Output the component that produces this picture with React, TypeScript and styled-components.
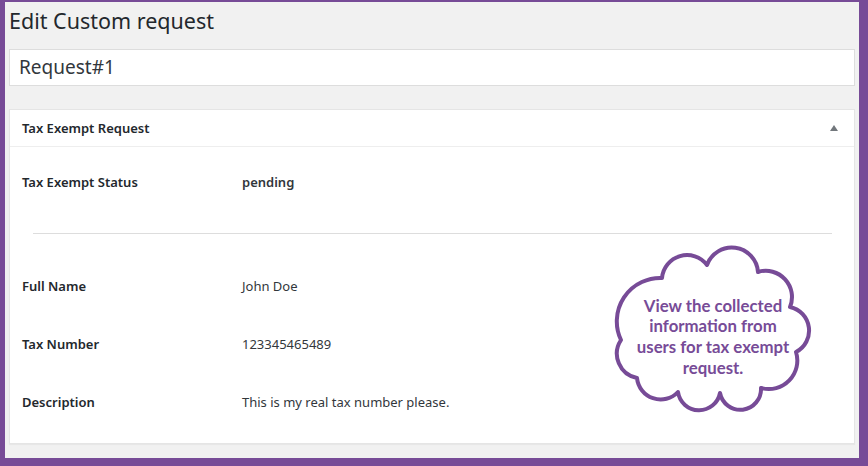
import styled, { createGlobalStyle } from 'styled-components'

const GlobalStyle = createGlobalStyle`
  html, body {
    margin: 0;
    padding: 0;
    background: #774b97;
  }
  * { box-sizing: border-box; }
`

const purple = '#774b97'

const Frame = styled.div`
  width: 868px;
  height: 466px;
  border-style: solid;
  border-color: ${purple};
  border-width: 2px 9px 8px 5px;
  background: #f1f1f1;
  padding: 0 4px;
  font-family: "Noto Sans", "Open Sans", sans-serif;
  color: #23282d;
  overflow: hidden;
`

const Heading = styled.h1`
  margin: 0;
  padding: 5px 0 0 0;
  height: 47px;
  font-size: 21.5px;
  font-weight: 400;
  line-height: 28px;
  color: #23282d;
`

const TitleBox = styled.div`
  height: 37px;
  background: #fff;
  border: 1px solid #ddd;
  padding: 0 9px;
  font-size: 19px;
  line-height: 34px;
  color: #32373c;
`

const Postbox = styled.section`
  position: relative;
  margin-top: 23px;
  height: 335px;
  background: #fff;
  border: 1px solid #e5e5e5;
  box-shadow: 0 1px 1px rgba(0, 0, 0, 0.04);
`

const PostboxHeader = styled.div`
  display: flex;
  align-items: center;
  justify-content: space-between;
  height: 37px;
  padding: 0 16px 0 12px;
  border-bottom: 1px solid #eee;
  font-size: 13px;
  font-weight: 600;
`

const Toggle = styled.span`
  width: 0;
  height: 0;
  border-left: 4px solid transparent;
  border-right: 4px solid transparent;
  border-bottom: 6px solid #72777c;
`

const Body = styled.div`
  padding: 6px 22px 0 12px;
`

const Row = styled.div`
  display: grid;
  grid-template-columns: 220px 1fr;
  align-items: center;
  height: 58px;
  font-size: 13px;
`

const Label = styled.span`
  font-weight: 600;
`

const Value = styled.span<{ $strong?: boolean }>`
  font-weight: ${(p) => (p.$strong ? 600 : 400)};
  color: #32373c;
`

const Divider = styled.hr`
  margin: 22px 0 23px 11px;
  border: 0;
  border-top: 1px solid #ddd;
  height: 0;
`

const Callout = styled.div`
  position: absolute;
  left: 607px;
  top: 137px;
  width: 198px;
  height: 170px;
  display: flex;
  align-items: center;
  justify-content: center;
  padding: 10px 6px 0 0;
`

const CloudSvg = styled.svg`
  position: absolute;
  inset: 0;
  overflow: visible;
`

const CalloutText = styled.p`
  position: relative;
  margin: 0;
  text-align: center;
  font-family: Lato, "Open Sans", sans-serif;
  font-weight: 700;
  font-size: 16.8px;
  line-height: 20.6px;
  color: ${purple};
`

// cusp points of the cloud (page coords) and how far each lobe bulges out
const lobes: { to: [number, number]; bulge: number }[] = [
  { to: [662, 278], bulge: 21 },
  { to: [707, 265], bulge: 16 },
  { to: [758, 272], bulge: 21 },
  { to: [790, 307], bulge: 15 },
  { to: [796, 352], bulge: 16 },
  { to: [761, 388], bulge: 15 },
  { to: [720, 393], bulge: 20 },
  { to: [678, 392], bulge: 18 },
  { to: [637, 378], bulge: 14 },
  { to: [621, 340], bulge: 11 },
]

function cloudPath(ox: number, oy: number) {
  let prev: [number, number] = [621, 340]
  let d = `M ${prev[0] - ox} ${prev[1] - oy}`
  for (const { to, bulge } of lobes) {
    const len = Math.hypot(to[0] - prev[0], to[1] - prev[1])
    const r = ((len * len) / 4 + bulge * bulge) / (2 * bulge)
    const large = bulge > len / 2 ? 1 : 0
    d += ` A ${r.toFixed(1)} ${r.toFixed(1)} 0 ${large} 1 ${to[0] - ox} ${to[1] - oy}`
    prev = to
  }
  return d + ' Z'
}

function Cloud() {
  return (
    <Callout>
      <CloudSvg width="198" height="170" viewBox="0 0 198 170">
        <path d={cloudPath(617, 247)} fill="#fff" stroke={purple} strokeWidth="4" strokeLinejoin="round" />
      </CloudSvg>
      <CalloutText>
        View the collected<br />
        information from<br />
        users for tax exempt<br />
        request.
      </CalloutText>
    </Callout>
  )
}

export default function App() {
  return (
    <>
      <GlobalStyle />
      <Frame>
        <Heading>Edit Custom request</Heading>
        <TitleBox>Request#1</TitleBox>
        <Postbox>
          <PostboxHeader>
            <span>Tax Exempt Request</span>
            <Toggle />
          </PostboxHeader>
          <Body>
            <Row>
              <Label>Tax Exempt Status</Label>
              <Value $strong>pending</Value>
            </Row>
            <Divider />
            <Row>
              <Label>Full Name</Label>
              <Value>John Doe</Value>
            </Row>
            <Row>
              <Label>Tax Number</Label>
              <Value>123345465489</Value>
            </Row>
            <Row>
              <Label>Description</Label>
              <Value>This is my real tax number please.</Value>
            </Row>
          </Body>
          <Cloud />
        </Postbox>
      </Frame>
    </>
  )
}
